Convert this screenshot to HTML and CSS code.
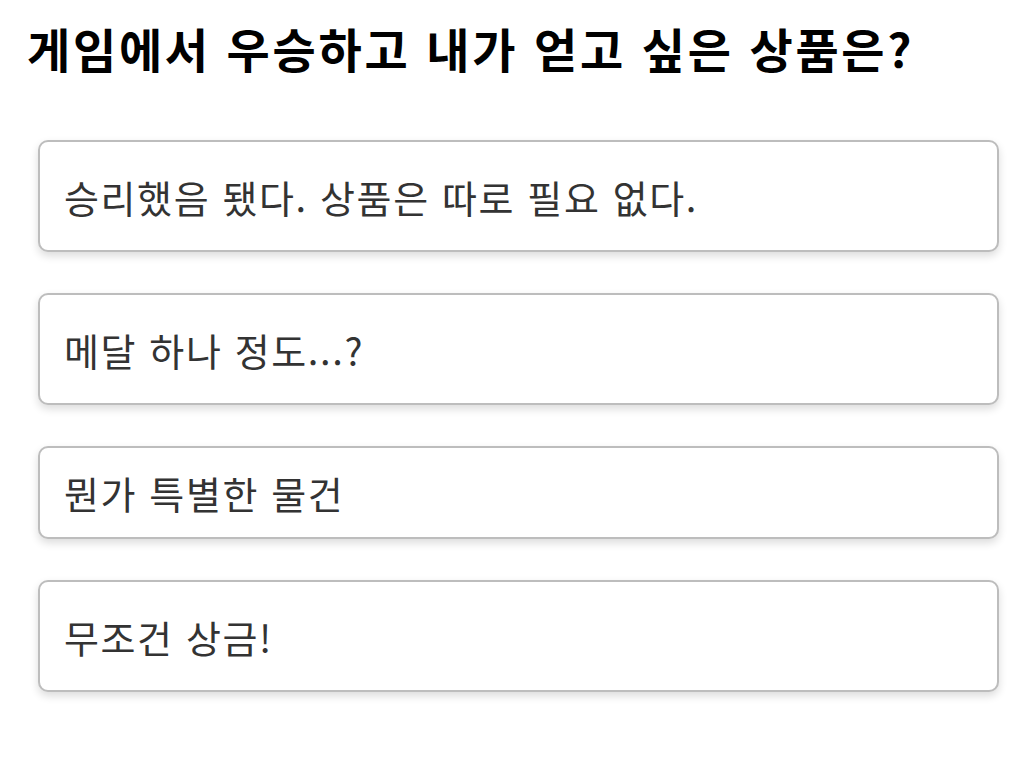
FILE: index.html
```html
<!DOCTYPE html>
<html lang="ko">
<head>
<meta charset="utf-8">
<title>퀴즈</title>
<link rel="stylesheet" href="styles.css">
</head>
<body>
<main class="page">
  <h1 class="question">게임에서 우승하고 내가 얻고 싶은 상품은?</h1>
  <ul class="options">
    <li class="option">승리했음 됐다. 상품은 따로 필요 없다.</li>
    <li class="option">메달 하나 정도...?</li>
    <li class="option option-compact">뭔가 특별한 물건</li>
    <li class="option">무조건 상금!</li>
  </ul>
</main>
</body>
</html>
```

FILE: styles.css
```css
html, body {
  margin: 0;
  padding: 0;
  background: #ffffff;
}

body {
  font-family: "Noto Sans CJK KR", "Noto Sans", sans-serif;
  color: #000;
}

.page {
  padding: 14px 31px 40px 27px;
}

.question {
  margin: 0;
  font-size: 47px;
  font-weight: 700;
  line-height: 68px;
  letter-spacing: 2.7px;
  color: #000;
}

.options {
  list-style: none;
  margin: 58px 0 0 11px;
  padding: 0;
  display: flex;
  flex-direction: column;
  gap: 41px;
}

.option {
  border: 2px solid #bdbdbd;
  border-radius: 10px;
  background: #fff;
  box-shadow: 0 4px 8px rgba(0, 0, 0, 0.14);
  padding: 27px 24px 25px;
  font-size: 38px;
  line-height: 56px;
  letter-spacing: 1.6px;
  color: #333;
}

.option-compact {
  padding-top: 17px;
  padding-bottom: 16px;
}
```
